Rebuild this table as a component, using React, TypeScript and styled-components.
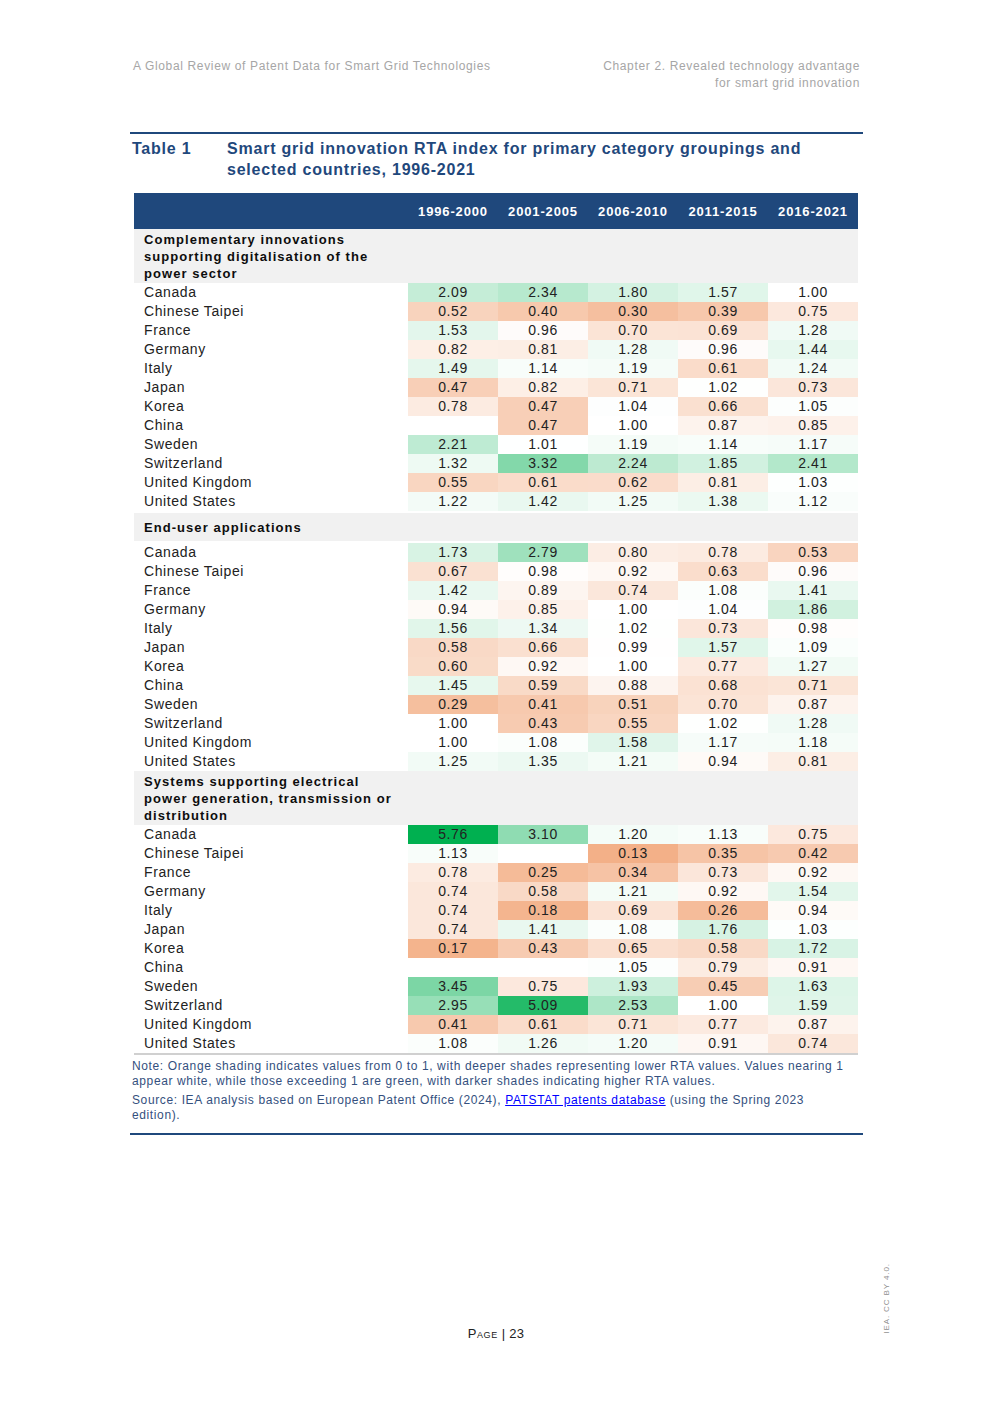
import React from "react";
import styled, { createGlobalStyle } from "styled-components";

const GlobalStyle = createGlobalStyle`
  html, body { margin: 0; padding: 0; background: #ffffff; }
  body { font-family: "Liberation Sans", Arial, sans-serif; }
`;

const NAVY = "#1f487c";
const NOTE = "#34507e";

type Val = number | null;
type Country = { name: string; values: Val[] };
type Section = { title: string; rows: Country[] };

const names = [
  "Canada",
  "Chinese Taipei",
  "France",
  "Germany",
  "Italy",
  "Japan",
  "Korea",
  "China",
  "Sweden",
  "Switzerland",
  "United Kingdom",
  "United States",
];

const mk = (data: Val[][]): Country[] =>
  data.map((values, i) => ({ name: names[i], values }));

const sections: Section[] = [
  {
    title: "Complementary innovations supporting digitalisation of the power sector",
    rows: mk([
      [2.09, 2.34, 1.8, 1.57, 1.0],
      [0.52, 0.4, 0.3, 0.39, 0.75],
      [1.53, 0.96, 0.7, 0.69, 1.28],
      [0.82, 0.81, 1.28, 0.96, 1.44],
      [1.49, 1.14, 1.19, 0.61, 1.24],
      [0.47, 0.82, 0.71, 1.02, 0.73],
      [0.78, 0.47, 1.04, 0.66, 1.05],
      [null, 0.47, 1.0, 0.87, 0.85],
      [2.21, 1.01, 1.19, 1.14, 1.17],
      [1.32, 3.32, 2.24, 1.85, 2.41],
      [0.55, 0.61, 0.62, 0.81, 1.03],
      [1.22, 1.42, 1.25, 1.38, 1.12],
    ]),
  },
  {
    title: "End-user applications",
    rows: mk([
      [1.73, 2.79, 0.8, 0.78, 0.53],
      [0.67, 0.98, 0.92, 0.63, 0.96],
      [1.42, 0.89, 0.74, 1.08, 1.41],
      [0.94, 0.85, 1.0, 1.04, 1.86],
      [1.56, 1.34, 1.02, 0.73, 0.98],
      [0.58, 0.66, 0.99, 1.57, 1.09],
      [0.6, 0.92, 1.0, 0.77, 1.27],
      [1.45, 0.59, 0.88, 0.68, 0.71],
      [0.29, 0.41, 0.51, 0.7, 0.87],
      [1.0, 0.43, 0.55, 1.02, 1.28],
      [1.0, 1.08, 1.58, 1.17, 1.18],
      [1.25, 1.35, 1.21, 0.94, 0.81],
    ]),
  },
  {
    title: "Systems supporting electrical power generation, transmission or distribution",
    rows: mk([
      [5.76, 3.1, 1.2, 1.13, 0.75],
      [1.13, null, 0.13, 0.35, 0.42],
      [0.78, 0.25, 0.34, 0.73, 0.92],
      [0.74, 0.58, 1.21, 0.92, 1.54],
      [0.74, 0.18, 0.69, 0.26, 0.94],
      [0.74, 1.41, 1.08, 1.76, 1.03],
      [0.17, 0.43, 0.65, 0.58, 1.72],
      [null, null, 1.05, 0.79, 0.91],
      [3.45, 0.75, 1.93, 0.45, 1.63],
      [2.95, 5.09, 2.53, 1.0, 1.59],
      [0.41, 0.61, 0.71, 0.77, 0.87],
      [1.08, 1.26, 1.2, 0.91, 0.74],
    ]),
  },
];

const periods = ["1996-2000", "2001-2005", "2006-2010", "2011-2015", "2016-2021"];

const MIN = 0.13;
const MAX = 5.76;
const ORANGE = [243, 176, 136];
const GREEN = [0, 176, 80];

function shade(v: Val): string {
  if (v === null) return "#ffffff";
  let t: number;
  let c: number[];
  if (v < 1) {
    t = (1 - v) / (1 - MIN);
    c = ORANGE;
  } else {
    t = (v - 1) / (MAX - 1);
    c = GREEN;
  }
  t = Math.max(0, Math.min(1, t));
  const mix = c.map((ch) => Math.round(255 + (ch - 255) * t));
  return `rgb(${mix[0]}, ${mix[1]}, ${mix[2]})`;
}

const Page = styled.div`
  width: 992px;
  height: 1403px;
  display: flex;
  flex-direction: column;
  overflow: hidden;
`;

const RunningHead = styled.header`
  display: flex;
  justify-content: space-between;
  align-items: flex-start;
  padding: 58px 132px 0 133px;
  color: #a6a6a6;
  font-size: 12px;
  line-height: 17px;
  letter-spacing: 0.65px;
`;

const HeadRight = styled.div`
  text-align: right;
`;

const Figure = styled.section`
  margin: 40px 0 0 130px;
  width: 733px;
  border-top: 2px solid ${NAVY};
  border-bottom: 2px solid ${NAVY};
  padding-bottom: 10px;
`;

const Caption = styled.div`
  display: grid;
  grid-template-columns: 95px 1fr;
  padding: 4px 40px 0 2px;
  color: ${NAVY};
  font-weight: 700;
  font-size: 16px;
  line-height: 21px;
  letter-spacing: 0.78px;
`;

const DataTable = styled.div`
  margin: 13px 0 0 4px;
  width: 724px;
  display: flex;
  flex-direction: column;
  border-bottom: 2px solid #d0d0d0;
`;

const Row = styled.div`
  display: grid;
  grid-template-columns: 274px repeat(5, 90px);
`;

const HeaderRow = styled(Row)`
  height: 36px;
  align-items: center;
  background: ${NAVY};
  color: #ffffff;
  font-weight: 700;
  font-size: 13px;
  letter-spacing: 0.85px;
`;

const HeadCell = styled.div`
  text-align: center;
`;

const CategoryRow = styled.div<{ $spaced?: boolean }>`
  display: flex;
  align-items: center;
  min-height: 28px;
  margin: ${(p) => (p.$spaced ? "2px 0" : "0")};
  padding: 1.5px 0;
  box-sizing: border-box;
  background: #f1f1f1;
`;

const CategoryLabel = styled.div`
  width: 252px;
  padding-left: 10px;
  font-weight: 700;
  font-size: 13px;
  line-height: 17px;
  letter-spacing: 1.05px;
  color: #0d0d0d;
`;

const DataRow = styled(Row)`
  height: 19px;
  font-size: 14px;
  letter-spacing: 0.6px;
  color: #222222;
`;

const CountryCell = styled.div`
  padding-left: 10px;
  line-height: 19px;
`;

const ValueCell = styled.div`
  text-align: center;
  line-height: 19px;
`;

const Notes = styled.div`
  padding: 4px 10px 0 2px;
  color: ${NOTE};
  font-size: 12px;
  line-height: 15px;
  letter-spacing: 0.62px;
  display: flex;
  flex-direction: column;
  gap: 4px;
`;

const NoteParagraph = styled.p`
  margin: 0;
`;

const NoteLink = styled.a`
  color: #0000ff;
  text-decoration: underline;
`;

const Footer = styled.footer`
  margin-top: auto;
  margin-bottom: 61px;
  display: grid;
  grid-template-columns: 1fr auto 1fr;
  align-items: end;
`;

const PageNumber = styled.div`
  font-size: 13px;
  line-height: 16px;
  color: #222222;
  letter-spacing: 0.3px;
`;

const PageWord = styled.span`
  font-variant: small-caps;
  letter-spacing: 0.6px;
`;

const RightsMark = styled.div`
  justify-self: start;
  margin-left: 358px;
  margin-bottom: 8px;
  writing-mode: vertical-rl;
  transform: rotate(180deg);
  font-size: 8px;
  letter-spacing: 0.9px;
  color: #8f8f8f;
`;

const fmt = (v: Val) => (v === null ? "" : v.toFixed(2));

export default function App() {
  return (
    <Page>
      <GlobalStyle />
      <RunningHead>
        <div>A Global Review of Patent Data for Smart Grid Technologies</div>
        <HeadRight>
          Chapter 2. Revealed technology advantage
          <br />
          for smart grid innovation
        </HeadRight>
      </RunningHead>

      <Figure>
        <Caption>
          <div>Table 1</div>
          <div>
            Smart grid innovation RTA index for primary category groupings and
            selected countries, 1996-2021
          </div>
        </Caption>

        <DataTable>
          <HeaderRow>
            <div />
            {periods.map((p) => (
              <HeadCell key={p}>{p}</HeadCell>
            ))}
          </HeaderRow>
          {sections.map((s, si) => (
            <React.Fragment key={s.title}>
              <CategoryRow $spaced={si === 1}>
                <CategoryLabel>{s.title}</CategoryLabel>
              </CategoryRow>
              {s.rows.map((r) => (
                <DataRow key={r.name}>
                  <CountryCell>{r.name}</CountryCell>
                  {r.values.map((v, i) => (
                    <ValueCell key={i} style={{ background: shade(v) }}>
                      {fmt(v)}
                    </ValueCell>
                  ))}
                </DataRow>
              ))}
            </React.Fragment>
          ))}
        </DataTable>

        <Notes>
          <NoteParagraph>
            Note: Orange shading indicates values from 0 to 1, with deeper shades
            representing lower RTA values. Values nearing 1 appear white, while those
            exceeding 1 are green, with darker shades indicating higher RTA values.
          </NoteParagraph>
          <NoteParagraph>
            Source: IEA analysis based on European Patent Office (2024),{" "}
            <NoteLink href="#">PATSTAT patents database</NoteLink> (using the Spring
            2023 edition).
          </NoteParagraph>
        </Notes>
      </Figure>

      <Footer>
        <div />
        <PageNumber>
          <PageWord>Page</PageWord> | 23
        </PageNumber>
        <RightsMark>IEA. CC BY 4.0.</RightsMark>
      </Footer>
    </Page>
  );
}
